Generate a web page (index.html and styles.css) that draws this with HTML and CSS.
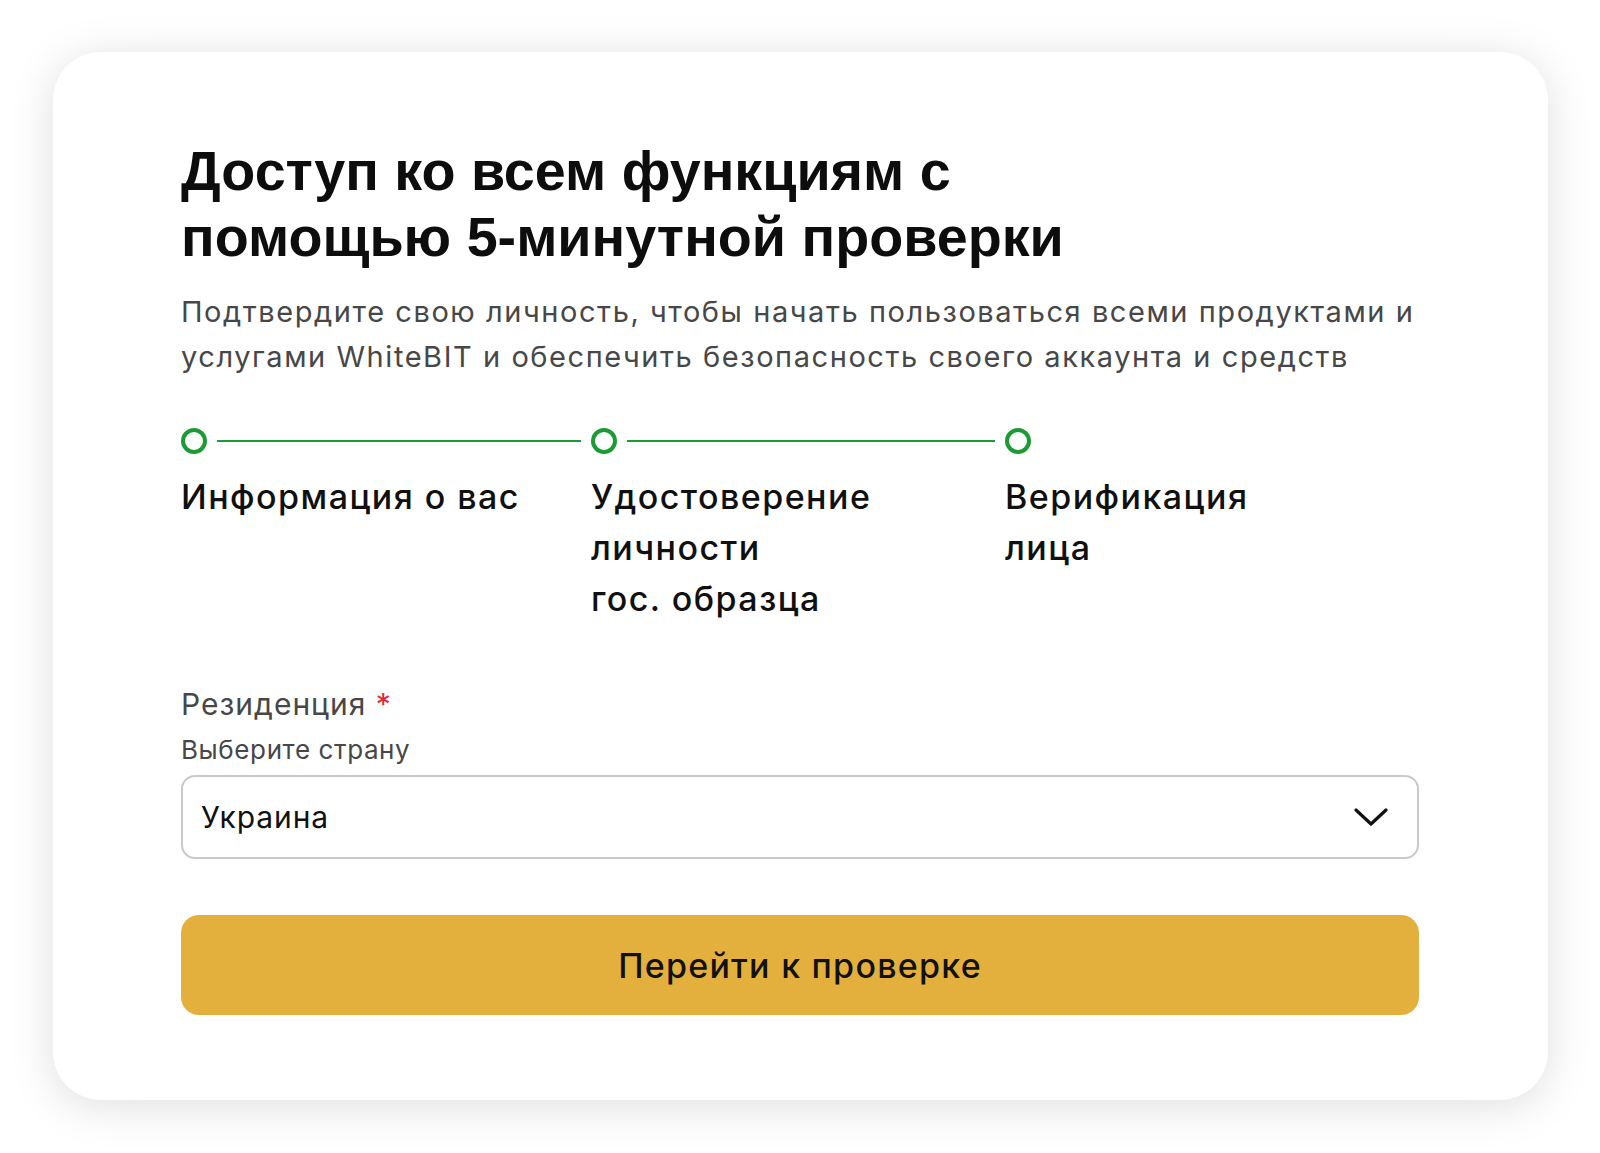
FILE: index.html
```html
<!DOCTYPE html>
<html lang="ru">
<head>
<meta charset="UTF-8" />
<meta name="viewport" content="width=device-width, initial-scale=1" />
<title>Верификация</title>
<link rel="stylesheet" href="styles.css">
</head>
<body>
<main class="card">
  <h1 class="title">Доступ ко всем функциям с<br>помощью 5-минутной проверки</h1>
  <p class="lead">Подтвердите свою личность, чтобы начать пользоваться всеми продуктами и<br>услугами WhiteBIT и обеспечить безопасность своего аккаунта и средств</p>

  <ol class="steps">
    <li class="step">
      <div class="step-track"><span class="dot"></span><span class="bar"></span></div>
      <div class="step-label">Информация о вас</div>
    </li>
    <li class="step">
      <div class="step-track"><span class="dot"></span><span class="bar"></span></div>
      <div class="step-label">Удостоверение<br>личности<br>гос. образца</div>
    </li>
    <li class="step">
      <div class="step-track"><span class="dot"></span></div>
      <div class="step-label">Верификация<br>лица</div>
    </li>
  </ol>

  <section class="field">
    <div class="field-label">Резиденция <span class="req">*</span></div>
    <div class="field-hint">Выберите страну</div>
    <div class="select">
      <span class="select-value">Украина</span>
      <svg class="chevron" width="34" height="20" viewBox="0 0 34 20" fill="none">
        <path d="M2 3 L17 17 L32 3" stroke="#111" stroke-width="3.2" stroke-linecap="round" stroke-linejoin="round"/>
      </svg>
    </div>
  </section>

  <button class="btn" type="button">Перейти к проверке</button>
</main>
</body>
</html>
```

FILE: styles.css
```css
body {
  margin: 0;
  padding: 52px 52px 53px 53px;
  background: #fff;
  font-family: Inter, 'Noto Sans', sans-serif;
  color: #111;
}
.card {
  background: #fff;
  border-radius: 48px;
  box-shadow: 0 6px 46px rgb(0 0 0 / 0.13);
  padding: 86px 129px 85px 128px;
  display: flex;
  flex-direction: column;
}
.title {
  margin: 0;
  font-family: 'Liberation Sans', Arial, sans-serif;
  font-weight: 700;
  font-size: 55.7px;
  line-height: 66px;
  color: #0d0d0d;
}
.lead {
  margin: 19px 0 0;
  font-size: 29px;
  line-height: 45px;
  color: #474747;
  letter-spacing: 1.56px;
}
.steps {
  list-style: none;
  margin: 49px 0 0;
  padding: 0;
  display: grid;
  grid-template-columns: 410px 414px 1fr;
}
.step-track {
  display: flex;
  align-items: center;
  gap: 10px;
  height: 26px;
  padding-right: 10px;
}
.dot {
  width: 18px;
  height: 18px;
  border: 4px solid #1c9b34;
  border-radius: 50%;
  flex: none;
}
.bar {
  flex: 1;
  height: 2px;
  background: #1c9b34;
}
.step-label {
  margin-top: 17px;
  font-size: 34px;
  line-height: 51px;
  font-weight: 500;
  color: #101010;
  letter-spacing: 1.45px;
}
.field {
  margin-top: 60px;
}
.field-label {
  font-size: 30px;
  line-height: 40px;
  color: #474747;
  letter-spacing: 1px;
}
.req {
  color: #e8262b;
}
.field-hint {
  margin-top: 9px;
  font-size: 26px;
  line-height: 34px;
  color: #474747;
  letter-spacing: 0.6px;
}
.select {
  margin-top: 8px;
  height: 84px;
  box-sizing: border-box;
  border: 2px solid #c9c9c9;
  border-radius: 14px;
  display: flex;
  align-items: center;
  justify-content: space-between;
  padding: 0 29px 0 18px;
}
.select-value {
  font-size: 30px;
  color: #111;
  letter-spacing: 0.9px;
}
.btn {
  margin-top: 56px;
  height: 100px;
  border: none;
  border-radius: 18px;
  background: #e4b03d;
  font-family: Inter, 'Noto Sans', sans-serif;
  font-size: 34px;
  font-weight: 500;
  color: #111;
  letter-spacing: 1.25px;
}
```
